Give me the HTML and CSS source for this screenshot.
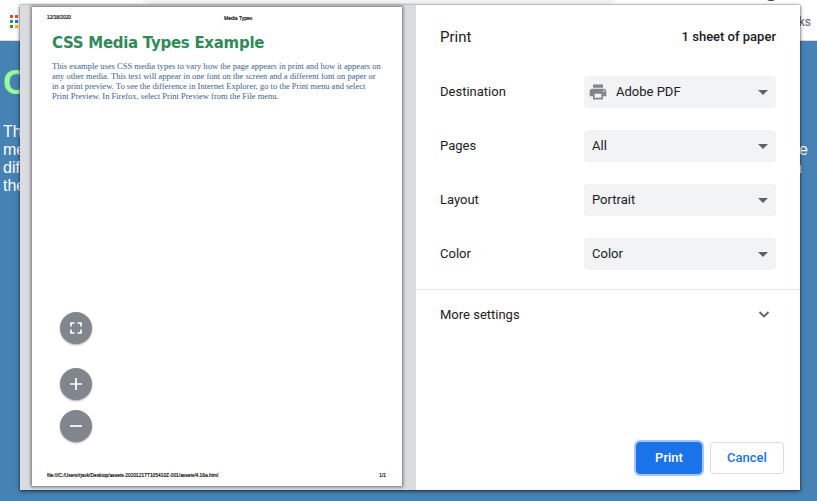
FILE: index.html
```html
<!DOCTYPE html>
<html lang="en">
<head>
<meta charset="utf-8">
<title>Print</title>
<link rel="stylesheet" href="styles.css">
</head>
<body>
<div class="browser">
  <header class="toolbar">
    <div class="omnibox"></div>
    <div class="avatar"></div>
    <div class="bookmarks">
      <div class="apps"><i class="r"></i><i class="r"></i><i class="g"></i><i class="b"></i><i class="g"></i><i class="y"></i></div>
      <span>ks</span>
    </div>
  </header>
  <main class="page">
    <h1>C</h1>
    <div class="page-text">
      <p>Th<br>me<br>dif<br>the</p>
      <p class="page-end">e<br><span>n</span></p>
    </div>
  </main>
</div>

<div class="dialog">
  <section class="preview">
    <article class="paper">
      <header class="paper-head"><span class="date">12/18/2020</span><span>Media Types</span></header>
      <h2>CSS Media Types Example</h2>
      <p class="copy">This example uses CSS media types to vary how the page appears in print and how it appears on<br>any other media. This text will appear in one font on the screen and a different font on paper or<br>in a print preview. To see the difference in Internet Explorer, go to the Print menu and select<br>Print Preview. In Firefox, select Print Preview from the File menu.</p>
      <div class="zoom">
        <button class="round fit" aria-label="Fit to page"><svg width="32" height="32" viewBox="0 0 32 32"><path d="M11 14.500V11h3.500M17.500 11H21v3.500M21 17.500V21h-3.500M14.500 21H11v-3.500"/></svg></button>
        <button class="round" aria-label="Zoom in"><svg width="32" height="32" viewBox="0 0 32 32"><path d="M10 16h12M16 10v12"/></svg></button>
        <button class="round" aria-label="Zoom out"><svg width="32" height="32" viewBox="0 0 32 32"><path d="M10 16h12"/></svg></button>
      </div>
      <footer class="paper-foot"><span>file:///C:/Users/rjavk/Desktop/assets-20201217T105410Z-001/assets/4.16a.html</span><span>1/1</span></footer>
    </article>
  </section>

  <section class="settings">
    <header class="title"><span>Print</span><span class="sheets">1 sheet of paper</span></header>
    <div class="rows">
      <div class="row"><span>Destination</span><div class="select">
        <svg class="printer" width="20" height="20" viewBox="0 0 24 24"><path d="M19 8H5c-1.660 0-3 1.340-3 3v6h4v4h12v-4h4v-6c0-1.660-1.340-3-3-3zm-3 11H8v-5h8v5zm3-7c-.550 0-1-.450-1-1s.450-1 1-1 1 .450 1 1-.450 1-1 1zm-1-9H6v4h12V3z"/></svg>
        <span>Adobe PDF</span><i class="arrow"></i></div></div>
      <div class="row"><span>Pages</span><div class="select"><span>All</span><i class="arrow"></i></div></div>
      <div class="row"><span>Layout</span><div class="select"><span>Portrait</span><i class="arrow"></i></div></div>
      <div class="row"><span>Color</span><div class="select"><span>Color</span><i class="arrow"></i></div></div>
    </div>
    <div class="more"><span>More settings</span><svg width="24" height="24" viewBox="0 0 24 24"><path d="M7.500 10l4.500 4.500 4.500-4.500"/></svg></div>
    <footer class="actions"><button class="btn primary">Print</button><button class="btn">Cancel</button></footer>
  </section>
</div>
</body>
</html>
```
FILE: styles.css
```css
* { box-sizing: border-box; }
body { margin: 0; width: 817px; height: 501px; overflow: hidden; position: relative; font-family: Roboto, sans-serif; background: #4682b4; }
h1, h2, p { margin: 0; }
button { font: inherit; padding: 0; border: 0; }

.toolbar { position: relative; height: 41px; background: #fff; border-bottom: 1px solid #dadce0; overflow: hidden; }
.omnibox { width: 482px; height: 28px; margin: -24px 0 0 138px; border-radius: 14px; background: #f1f3f4; }
.avatar { position: absolute; left: 763px; top: -15px; width: 16px; height: 16px; border-radius: 50%; background: #333; }
.bookmarks { display: flex; justify-content: space-between; padding: 11px 6px 0 10px; font-size: 12px; line-height: 14px; color: #5f6368; }
.apps { display: grid; grid-template-columns: 3px 3px; gap: 2px; align-content: start; }
.apps i { height: 3px; }
.r { background: #ea4335; } .g { background: #2a9d4c; } .b { background: #1a73e8; } .y { background: #fbae05; }
.page { color: #fff; font: 16px/18px "Liberation Sans", sans-serif; padding: 19px 9px 0 3px; }
.page h1 { font: bold 35px/44px "Liberation Sans", sans-serif; color: #98fb98; }
.page-text { display: flex; justify-content: space-between; padding-top: 19px; }
.page-end { width: 9px; padding-top: 18px; }
.page-end span { margin-left: -6px; }

.dialog { position: absolute; left: 20px; top: 5px; width: 780px; height: 485px; display: flex; background: #fff; box-shadow: 0 0 1px rgba(0,0,0,.6), 0 1px 4px rgba(0,0,0,.65); }
.preview { width: 396px; padding: 2px 0 0 12px; background: #dadce0; }
.paper { display: flex; flex-direction: column; width: 370px; height: 479px; background: #fff; box-shadow: 0 0 3px 1px rgba(0,0,0,.5); }
.paper-head { display: grid; grid-template-columns: 177px 1fr; padding: 8px 0 0 15px; font: 5px/6px "Liberation Sans", sans-serif; color: #000; -webkit-text-stroke: .15px #000; }
.date { font-size: 4.8px; }
.paper h2 { margin: 12px 0 0 20px; font: bold 15px/20px "DejaVu Sans", sans-serif; letter-spacing: -.29px; color: #2e8b57; white-space: nowrap; }
.copy { margin: 8px 0 0 20px; font: 8.520px/10px "Liberation Serif", serif; color: #3b6288; white-space: nowrap; }
.zoom { display: flex; flex-direction: column; gap: 10px; margin: auto 0 31px 28px; }
.round { width: 32px; height: 32px; border-radius: 50%; background: #80868b; box-shadow: 0 1px 2px rgba(0,0,0,.35); }
.round svg { display: block; }
.round path { fill: none; stroke: #fff; stroke-width: 1.700; }
.fit { margin-bottom: 14px; }
.paper-foot { display: flex; justify-content: space-between; padding: 0 16px 7px 15px; font: 4.860px/6px "Liberation Sans", sans-serif; color: #000; white-space: nowrap; -webkit-text-stroke: .15px #000; }

.settings { flex: 1; display: flex; flex-direction: column; font-size: 13px; color: #202124; }
.title { display: flex; justify-content: space-between; align-items: center; padding: 0 24px 1px; height: 64px; font-size: 15px; }
.sheets { font-size: 13px; font-weight: 500; padding-bottom: 1px; }
.rows { display: flex; flex-direction: column; gap: 22px; padding: 7px 24px 19px; border-bottom: 1px solid #e8eaed; }
.row { display: flex; justify-content: space-between; align-items: center; height: 32px; }
.row > span { padding-bottom: 1px; }
.select { display: flex; align-items: center; width: 192px; height: 32px; padding: 0 8px 1px; border-radius: 4px; background: #f1f3f4; }
.printer { margin: 1px 8px 0 -4px; fill: #80868b; }
.arrow { margin: 1px 0 0 auto; border: 5px solid transparent; border-top-color: #5f6368; border-bottom: 0; }
.more { display: flex; justify-content: space-between; align-items: center; height: 48px; padding: 0 24px; }
.more svg { fill: none; stroke: #5f6368; stroke-width: 1.800; }
.actions { display: flex; justify-content: flex-end; gap: 8px; margin-top: auto; padding: 0 16px 16px; }
.btn { width: 74px; height: 32px; padding-bottom: 2px; border: 1px solid #dadce0; border-radius: 4px; background: #fff; color: #1a73e8; font-weight: 500; }
.primary { width: 66px; border-color: #1a73e8; background: #1a73e8; color: #fff; box-shadow: 0 0 0 2px #a3c7f7; }
```
